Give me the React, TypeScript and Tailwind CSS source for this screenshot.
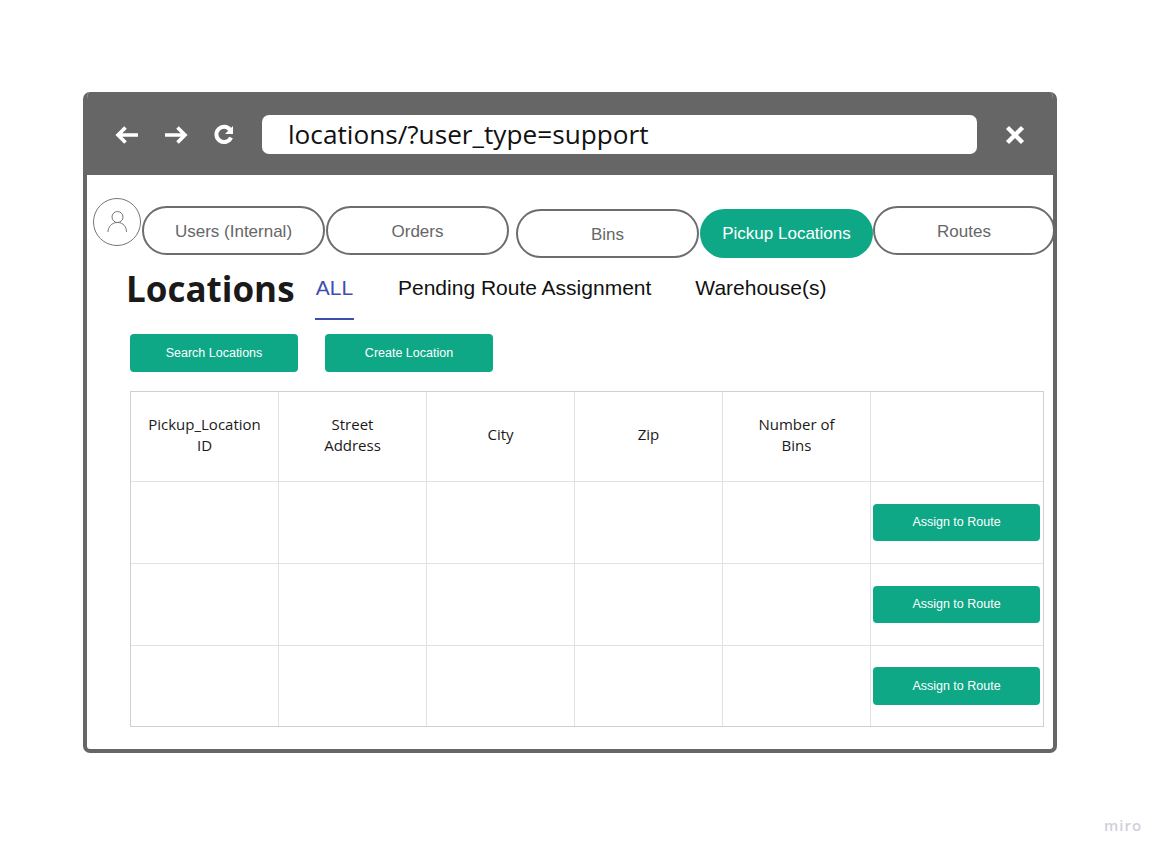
const LIB = "font-['Liberation_Sans',Arial,sans-serif]";
const OPEN = "font-['Open_Sans',sans-serif]";

function NavPill({ label, className = '', active = false }: { label: string; className?: string; active?: boolean }) {
  return (
    <div
      className={`flex h-[49px] shrink-0 items-center justify-center rounded-full text-[17px] font-['Liberation_Sans',Arial,sans-serif] ${
        active ? 'bg-[#0ea887] text-white' : 'border-[2.5px] border-[#6d6d6d] bg-white pt-[3px] text-[#666666]'
      } ${className}`}
    >
      {label}
    </div>
  );
}

function GreenButton({ label, className = '' }: { label: string; className?: string }) {
  return (
    <button className={`flex h-[38px] w-[168px] items-center justify-center rounded-[4px] bg-[#0ea887] text-[12.5px] text-white ${LIB} ${className}`}>
      {label}
    </button>
  );
}

const HEADERS = ['Pickup_Location ID', 'Street Address', 'City', 'Zip', 'Number of Bins', ''];
const ROW_BTN_STYLE = ['mt-[22px] !h-[37px]', 'mt-[22px] !h-[37px]', 'mt-[21px]'];

export default function App() {
  return (
    <div className="relative h-[856px] w-[1167px] overflow-hidden bg-white pl-[83px] pt-[92px]">
      <div className="flex h-[661px] w-[974px] flex-col overflow-hidden rounded-[7px] border-4 border-t-0 border-[#666666] bg-white">
        {/* browser chrome */}
        <div className="-mx-1 flex h-[83px] shrink-0 items-center bg-[#666666] pt-[2px]">
          <div className="flex h-[39px] items-center pl-[31px] text-white">
            <svg width="26" height="22" viewBox="0 0 26 22" fill="none" stroke="currentColor" strokeWidth="3.6">
              <path d="M24 11H4M11.5 3.5 4 11l7.5 7.5" />
            </svg>
            <svg className="ml-[23px]" width="26" height="22" viewBox="0 0 26 22" fill="none" stroke="currentColor" strokeWidth="3.6">
              <path d="M2 11h20M14.5 3.5 22 11l-7.5 7.5" />
            </svg>
            <svg className="ml-[23px]" width="24" height="24" viewBox="0 0 24 24" fill="none" stroke="currentColor" strokeWidth="4">
              <path d="M19 14.5A7.6 7.6 0 1 1 18.2 7" />
              <path d="M21 3v8h-8z" fill="currentColor" stroke="none" />
            </svg>
          </div>
          <div className={`ml-[26px] flex h-[39px] w-[715px] items-center rounded-[7px] bg-white pl-[26px] text-[26.2px] text-[#111111] ${OPEN}`}>
            locations/?user_type=support
          </div>
          <svg className="ml-[26px] text-white" width="24" height="24" viewBox="0 0 24 24" fill="none" stroke="currentColor" strokeWidth="4.4">
            <path d="M4.5 4.5l15 15M19.5 4.5l-15 15" />
          </svg>
        </div>

        {/* nav row */}
        <div className="flex h-[83px] shrink-0 items-start pl-[6px] pt-[23px]">
          <div className="flex h-[48px] w-[48px] shrink-0 items-center justify-center rounded-full border border-[#777777] text-[#777777]">
            <svg width="22" height="24" viewBox="0 0 22 24" fill="none" stroke="currentColor" strokeWidth="1">
              <circle cx="11.5" cy="7" r="5.5" />
              <path d="M2 22c0-5 3.5-9.5 9.5-9.5S20.5 17 20.5 22" />
            </svg>
          </div>
          <NavPill label="Users (Internal)" className="ml-px mt-2 w-[183px]" />
          <NavPill label="Orders" className="ml-px mt-2 w-[183px]" />
          <NavPill label="Bins" className="ml-[7px] mt-[11px] w-[183px]" />
          <NavPill label="Pickup Locations" active className="ml-px mt-[11px] w-[173px]" />
          <NavPill label="Routes" className="mt-2 w-[182px]" />
        </div>

        {/* heading + sub tabs */}
        <div className="flex h-[62px] shrink-0 items-start pl-[39px]">
          <h1 className={`w-[169px] pt-px text-[35px] font-bold leading-[60px] text-[#1a1a1a] ${OPEN}`}>Locations</h1>
          <div className={`ml-[20px] flex text-[21px] leading-[60px] text-[#111111] ${LIB}`}>
            <div className="relative h-[62px] w-[39px] text-center text-[#3f4db0]">
              ALL
              <div className="absolute inset-x-0 bottom-0 h-[2px] bg-[#3f4db0]" />
            </div>
            <span className="ml-[44px]">Pending Route Assignment</span>
            <span className="ml-[44px]">Warehouse(s)</span>
          </div>
        </div>

        {/* actions */}
        <div className="mt-[14px] flex shrink-0 pl-[43px]">
          <GreenButton label="Search Locations" />
          <GreenButton label="Create Location" className="ml-[27px]" />
        </div>

        {/* table */}
        <div className="ml-[43px] mt-[19px] grid w-[914px] shrink-0 grid-cols-[148px_148px_148px_148px_148px_1fr] grid-rows-[89px_82px_82px_81px] border border-[#d0d0d0]">
          {HEADERS.map((h, i) => (
            <div
              key={i}
              className={`flex items-center justify-center border-[#e2e2e2] px-[30px] pb-[4px] text-center text-[15px] leading-[21px] text-[#1a1a1a] ${OPEN} ${i < 5 ? 'border-r' : ''} ${i === 0 ? '!px-0' : ''}`}
            >
              {i === 0 ? <span className="w-[130px]">{h}</span> : h}
            </div>
          ))}
          {ROW_BTN_STYLE.map((m, row) => (
            <div key={row} className="col-span-6 grid grid-cols-[148px_148px_148px_148px_148px_1fr] border-t border-[#e2e2e2]">
              {[0, 1, 2, 3, 4].map((c) => (
                <div key={c} className="border-r border-[#e2e2e2]" />
              ))}
              <div className="pl-[2px]">
                <GreenButton label="Assign to Route" className={`!w-[167px] ${m}`} />
              </div>
            </div>
          ))}
        </div>
      </div>

      <span className={`absolute left-[1104px] top-[814px] text-[15px] font-semibold tracking-[1px] text-[#d0d0da] ${OPEN}`}>miro</span>
    </div>
  );
}
